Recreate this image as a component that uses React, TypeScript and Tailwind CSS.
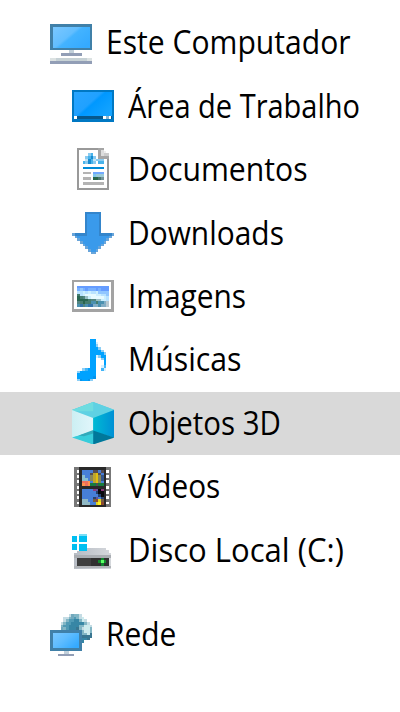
import React, { useLayoutEffect, useRef, useState } from 'react';

type Palette = Record<string, string>;

/* Draws rows of characters as coloured cells; a dot is an empty cell. */
function Cells({ rows, palette, x = 0, y = 0 }: { rows: string[]; palette: Palette; x?: number; y?: number }) {
  return (
    <>
      {rows.flatMap((row, r) =>
        row.split('').map((c, i) =>
          c === '.' ? null : <rect key={`${r}-${i}`} x={x + i} y={y + r} width="1" height="1" fill={palette[c]} />,
        ),
      )}
    </>
  );
}

function Icon({ children }: { children: React.ReactNode }) {
  return (
    <svg viewBox="0 0 16 16" className="h-[42.4px] w-[42.4px] shrink-0" shapeRendering="crispEdges">
      {children}
    </svg>
  );
}

function ComputerIcon() {
  return (
    <Icon>
      <defs>
        <linearGradient id="pc" x1="0" y1="0" x2="1" y2="0.7">
          <stop offset="0" stopColor="#7bc8ff" />
          <stop offset="0.48" stopColor="#62beff" />
          <stop offset="0.56" stopColor="#43b3ff" />
          <stop offset="1" stopColor="#35aaff" />
        </linearGradient>
      </defs>
      <rect x="0" y="0.9" width="16" height="9.8" fill="#4080a8" />
      <rect x="1.1" y="1.7" width="14.1" height="8.3" fill="url(#pc)" />
      <rect x="7.2" y="10.7" width="1.8" height="1.1" fill="#c3d1db" />
      <rect x="4.1" y="11.7" width="7.9" height="1.1" fill="#929eb6" />
      <rect x="0" y="13.7" width="16" height="1.2" fill="#dce2e2" />
      <rect x="2.2" y="13.7" width="11.6" height="1.2" fill="#c6d1d5" />
      <rect x="0" y="14.9" width="16" height="1.1" fill="#929eb6" />
    </Icon>
  );
}

function DesktopIcon() {
  return (
    <Icon>
      <defs>
        <linearGradient id="desk" x1="0" y1="0" x2="1" y2="0.7">
          <stop offset="0" stopColor="#29a5ff" />
          <stop offset="0.48" stopColor="#20a1ff" />
          <stop offset="0.55" stopColor="#0098ff" />
          <stop offset="1" stopColor="#14a3ff" />
        </linearGradient>
      </defs>
      <rect y="2" width="16" height="12" fill="#0078c3" />
      <rect x="0.8" y="2.8" width="14.4" height="9.1" fill="url(#desk)" />
      <rect x="0.8" y="11.8" width="14.4" height="1.2" fill="#07588c" />
      <rect x="0.8" y="11.8" width="1.1" height="1.2" fill="#fff" />
      <rect x="11.8" y="11.8" width="1.1" height="1.2" fill="#fff" />
      <rect x="12.9" y="11.8" width="1.1" height="1.2" fill="#8ab4cf" />
      <rect x="14" y="11.8" width="0.9" height="1.2" fill="#fff" />
    </Icon>
  );
}

function DocumentIcon() {
  return (
    <Icon>
      <rect x="2" width="12" height="16" fill="#999" />
      <rect x="2.8" y="0.9" width="10.3" height="14.1" fill="#fff" />
      <rect x="10" y="0" width="4" height="4.1" fill="#a5a5a5" />
      <rect x="11" y="0.9" width="1" height="2.1" fill="#ddd" />
      <rect x="12" y="0" width="2" height="1" fill="#fff" />
      <rect x="13" y="1" width="1" height="1" fill="#fff" />
      <rect x="12" y="1" width="1" height="1" fill="#eee" />
      <rect x="12" y="2" width="2" height="1" fill="#ccc" />
      <Cells
        x={4}
        y={2}
        rows={['..ba....', '.badb...', '.cdacbbb', 'abdab.aa']}
        palette={{ a: '#48b3eb', b: '#8acbf0', c: '#c3e4f5', d: '#168bd0' }}
      />
      <rect x="4" y="7" width="8" height="0.9" fill="#008bd7" />
      <rect x="4" y="8.9" width="3" height="1.1" fill="#b4b4b4" />
      <rect x="4" y="10.9" width="3" height="1.1" fill="#b4b4b4" />
      <rect x="4" y="13" width="8" height="0.9" fill="#b4b4b4" />
      <Cells
        x={8}
        y={9}
        rows={['bbbb', 'clll', 'gghk']}
        palette={{ b: '#70a9ff', c: '#7fc6ee', l: '#9bcbd7', g: '#28664b', h: '#49756f', k: '#73939b' }}
      />
    </Icon>
  );
}

function DownloadIcon() {
  return (
    <Icon>
      <path d="M5 0h6v8h5v1h-1v1h-1v1h-1v1h-1v1h-1v1h-1v1H9v1H7v-1H6v-1H5v-1H4v-1H3v-1H2v-1H1V9H0V8h5z" fill="#69a5da" />
      <path d="M5 0h6v8h4v1h-1v1h-1v1h-1v1h-1v1h-1v1H9v1H7v-1H6v-1H5v-1H4v-1H3v-1H2V9H1V8h4z" fill="#3485cb" />
      <path d="M5.8.8h4.4V9H14v1h-1v1h-1v1h-1v1h-1v1H9v1H7v-1H6v-1H5v-1H4v-1H3v-1H2V9h3.8z" fill="#3a9aeb" />
    </Icon>
  );
}

function ImageIcon() {
  return (
    <Icon>
      <rect y="2" width="16" height="11.8" fill="#a3a3a3" />
      <rect x="0.8" y="2.8" width="14.1" height="10.2" fill="#fff" />
      <Cells
        x={2}
        y={4}
        rows={[
          'bbbbbbbbbbbb',
          'cdcbcccbcbbb',
          'llmlmllmdddd',
          'glmwwwwmmlld',
          'Gghkmwwwwwml',
          'GGGGghhkkmml',
          'hgGggnngnnop',
          'nuhnuuoonoop',
        ]}
        palette={{
          b: '#659cff',
          c: '#78b1ff',
          d: '#91c6ff',
          l: '#b8e2ff',
          m: '#ccefff',
          w: '#e7faff',
          g: '#467d70',
          G: '#286551',
          h: '#528582',
          k: '#99bec4',
          n: '#4b91b0',
          u: '#3475ad',
          o: '#83adc4',
          p: '#b9c8d0',
        }}
      />
    </Icon>
  );
}

function MusicIcon() {
  return (
    <Icon>
      <Cells
        x={1.9}
        rows={[
          '.....aa....',
          '.....aal...',
          '.....aam...',
          '.....aaam..',
          '.....aaaam.',
          '.....aaaaam',
          '.....aalmaa',
          '.....aa..ma',
          '.....aa...a',
          '.....aa...a',
          '.....aa..lb',
          '..mbaaa..bl',
          'maaaaaa....',
          'aaaaaaa....',
          'aaaaaad....',
          'mdaadm.....',
        ]}
        palette={{ a: '#00a2ff', b: '#42b5f8', d: '#0794eb', l: '#d7f0ff', m: '#8dcff6' }}
      />
    </Icon>
  );
}

function CubeIcon() {
  return (
    <Icon>
      <defs>
        <linearGradient id="cubeR">
          <stop offset="0" stopColor="#00bad4" />
          <stop offset="1" stopColor="#008fd5" />
        </linearGradient>
        <linearGradient id="cubeL">
          <stop offset="0" stopColor="#cceff3" />
          <stop offset="1" stopColor="#e1f6fb" />
        </linearGradient>
      </defs>
      <g shapeRendering="auto">
        <path d="M8 0 16 3v10L8 16 0 13V3z" fill="#50cddd" />
        <path d="M8 0 16 3 8 6 0 3z" fill="#5fd1e3" />
        <path d="M8 0v3.5H0V3z" fill="#6edce0" />
        <path d="M0 3 8 6v5L0 13.5z" fill="url(#cubeL)" />
        <path d="M16 3 8 6v5l8 2.5z" fill="url(#cubeR)" />
        <path d="M0 13.4 8 11v5z" fill="#38cddb" />
        <path d="m2.5 12.6 5.5-2v1.3l-3.5 1z" fill="#32aabb" />
        <path d="M8 10.8 16 13.4 8 16z" fill="#00789b" />
      </g>
    </Icon>
  );
}

function VideoIcon() {
  return (
    <Icon>
      <rect x="0.8" y="0.8" width="14" height="15.2" fill="#777" />
      <rect x="2.7" y="0.8" width="10.3" height="15.2" fill="#292929" />
      {[1.8, 3.8, 5.8, 7.8, 9.8, 11.8, 13.8].map((y) => (
        <g key={y} fill="#fff">
          <rect x="1.7" y={y} width="1" height="1.1" />
          <rect x="13" y={y} width="1" height="1.1" />
        </g>
      ))}
      <Cells
        x={3.9}
        y={1.9}
        rows={['bbbbkkbk', 'bbbkyYkb', 'lbbnyYnd', 'llbnyYnd', 'rrobyYnb', 'oroggkgg']}
        palette={{
          b: '#477fd8',
          k: '#554c52',
          y: '#bea52d',
          Y: '#e2bf10',
          l: '#89bed0',
          n: '#88875a',
          d: '#34558c',
          r: '#ee705e',
          o: '#ff934c',
          g: '#167b3e',
        }}
      />
      <Cells
        x={3.9}
        y={9}
        rows={['bbbbmpkm', 'bbbbbdkk', 'bbbbbbdk', 'bbbbdpbd', 'llbbnryn', 'lllbbyor']}
        palette={{
          b: '#477fd8',
          m: '#8b397c',
          p: '#65539a',
          k: '#08090e',
          d: '#26436f',
          l: '#91b9c5',
          n: '#775a43',
          r: '#8c4930',
          y: '#ded025',
          o: '#ffef21',
        }}
      />
    </Icon>
  );
}

function DiskIcon() {
  return (
    <Icon>
      <defs>
        <linearGradient id="disk">
          <stop offset="0" stopColor="#b7bcc4" />
          <stop offset="1" stopColor="#d5d8dc" />
        </linearGradient>
      </defs>
      <path d="M2 7h11v1h1v1h.8v6H.8V9H2z" fill="url(#disk)" />
      <rect x="0.8" y="9.8" width="14" height="1" fill="#aaaeb3" />
      <rect x="0.8" y="13.9" width="14" height="1" fill="#b1b4b8" />
      <rect x="1.8" y="10.8" width="12" height="3" fill="#3f3f3f" />
      <rect x="7" y="10.8" width="6.8" height="3" fill="#303030" />
      <rect x="11" y="10.8" width="1" height="3" fill="#12842f" />
      <rect x="10" y="11.8" width="3" height="1" fill="#128a2c" />
      <rect x="11" y="11.8" width="1" height="1" fill="#5eff65" />
      <rect x="0" y="1.8" width="5.8" height="6.4" fill="#fff" />
      <path d="M0 2.8h1.9v2H0zM2.8 2h3v2.8h-3zM0 5.8h1.9v2H0zM2.8 5.8h3v2.4h-3z" fill="#00bff1" />
      <path d="M2.8 2h3v.7h-3z" fill="#79dff7" />
    </Icon>
  );
}

function NetworkIcon() {
  return (
    <Icon>
      <defs>
        <linearGradient id="net" x1="0" y1="0" x2="1" y2="0.7">
          <stop offset="0" stopColor="#7bc8ff" />
          <stop offset="0.48" stopColor="#60bdff" />
          <stop offset="1" stopColor="#35aaff" />
        </linearGradient>
      </defs>
      <Cells
        x={4}
        rows={[
          '...labbl....',
          '.llbacblw...',
          '.lbccddbwl..',
          'lbccdddddbl.',
          'bccddddbbwwl',
          'abcdddeblwwb',
          'bbbcddeebwwb',
          'abbcddeebbwe',
          'bbbccdedeeee',
          'bbbccddedde.',
          '.bbbcdddd...',
        ]}
        palette={{ a: '#72a9bd', b: '#82b6c5', c: '#509ab5', d: '#3786a5', e: '#397691', l: '#c4dce4', w: '#cdebee' }}
      />
      <rect y="6" width="12" height="8" fill="#4080a8" />
      <rect x="1" y="7" width="10" height="5.9" fill="url(#net)" />
      <rect x="5.2" y="14" width="1.9" height="1" fill="#c3d1db" />
      <rect x="3" y="15" width="6" height="0.9" fill="#929eb6" />
    </Icon>
  );
}

function Label({ text, width }: { text: string; width: number }) {
  const ref = useRef<HTMLSpanElement>(null);
  const [scale, setScale] = useState(1);
  useLayoutEffect(() => {
    if (ref.current) setScale(width / ref.current.offsetWidth);
  }, [width]);
  return (
    <span
      ref={ref}
      className="mb-px origin-left whitespace-nowrap text-[32.5px] leading-[60px] text-black"
      style={{ transform: `scaleX(${scale})` }}
    >
      {text}
    </span>
  );
}

type Item = { text: string; width: number; icon: React.ReactNode; selected?: boolean };

const children: Item[] = [
  { text: 'Área de Trabalho', width: 232, icon: <DesktopIcon /> },
  { text: 'Documentos', width: 180, icon: <DocumentIcon /> },
  { text: 'Downloads', width: 155.5, icon: <DownloadIcon /> },
  { text: 'Imagens', width: 118.5, icon: <ImageIcon /> },
  { text: 'Músicas', width: 113.5, icon: <MusicIcon /> },
  { text: 'Objetos 3D', width: 153, icon: <CubeIcon />, selected: true },
  { text: 'Vídeos', width: 92.5, icon: <VideoIcon /> },
  { text: 'Disco Local (C:)', width: 216, icon: <DiskIcon /> },
];

function Row({ item, nested }: { item: Item; nested?: boolean }) {
  return (
    <li
      className={`flex h-[63.4px] items-center gap-[13.8px] ${nested ? 'pl-[71.7px]' : 'pl-[50px]'} ${
        item.selected ? 'bg-[#d9d9d9]' : ''
      }`}
    >
      {item.icon}
      <Label text={item.text} width={item.width} />
    </li>
  );
}

export default function App() {
  return (
    <nav className="h-[712px] w-[400px] overflow-hidden bg-white pt-[11.2px] font-['Open_Sans','Noto_Sans',sans-serif]">
      <ul>
        <Row item={{ text: 'Este Computador', width: 244.5, icon: <ComputerIcon /> }} />
        {children.map((item) => (
          <Row key={item.text} item={item} nested />
        ))}
      </ul>
      <ul className="pt-[21.5px]">
        <Row item={{ text: 'Rede', width: 70, icon: <NetworkIcon /> }} />
      </ul>
    </nav>
  );
}
